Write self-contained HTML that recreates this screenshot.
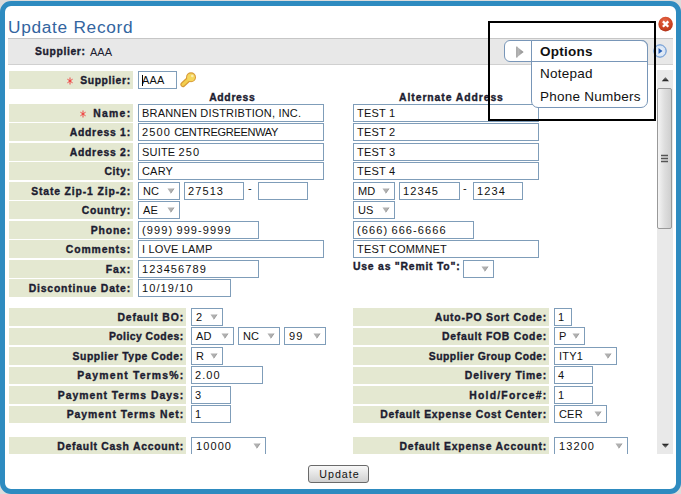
<!DOCTYPE html>
<html><head><meta charset="utf-8"><style>
html,body{margin:0;padding:0;}
body{width:681px;height:494px;overflow:hidden;background:#dcdcdc;position:relative;font-family:"Liberation Sans",sans-serif;}
#dlg{position:absolute;left:0;top:1px;width:671px;height:483px;border:5px solid #2e8bc0;border-radius:11px;background:#fff;}
#title{position:absolute;left:8px;top:17px;font-size:17.3px;letter-spacing:0.7px;color:#33659f;white-space:nowrap;}
#bar{position:absolute;left:8px;top:38px;width:665px;height:25px;background:#e8e8e8;border-top:1px solid #c6c6c6;border-bottom:1px solid #d0d0d0;}
#bar .s{position:absolute;left:27px;top:7px;font-size:10.4px;font-weight:bold;color:#1c1c30;white-space:nowrap;}
#bar .v{position:absolute;left:82px;top:6.5px;font-size:11px;color:#1c1c30;}
#clip{position:absolute;left:0;top:65px;width:681px;height:389px;overflow:hidden;}
#content{position:absolute;left:0;top:-65px;width:681px;height:600px;}
.lc{position:absolute;background:#e4e8d1;text-align:right;font-size:10.4px;font-weight:bold;color:#1c1c30;white-space:nowrap;box-sizing:border-box;padding-right:2.9px;}
.st{margin-right:7px;vertical-align:-1px;}
.dg{letter-spacing:1.1px;}
.in{position:absolute;border:1px solid #7f9db9;background:#fff;font-size:11px;letter-spacing:0.18px;color:#111;white-space:nowrap;padding-left:3px;box-sizing:content-box;overflow:hidden;}
.in{padding-left:0;text-indent:3px;}
.ar{position:absolute;right:4.2px;top:5.3px;}
.t{position:absolute;font-size:11px;color:#111;white-space:nowrap;}
.dash{line-height:14px;margin-top:-1px;}
.bl{position:absolute;font-size:10.4px;font-weight:bold;color:#1c1c30;white-space:nowrap;}
.hd{position:absolute;text-align:center;font-size:10.4px;font-weight:bold;color:#1c1c30;}
#sb{position:absolute;left:657px;top:70px;width:16px;height:384px;background:#e9e9e9;}
#thumb{position:absolute;left:657px;top:88px;width:15px;height:141px;border:1px solid #999;border-radius:2px;box-sizing:border-box;background:linear-gradient(to right,#f4f4f4,#dedede 50%,#cfcfcf);}
#blackbox{position:absolute;left:488px;top:21px;width:164px;height:96px;border:2px solid #000;}
#pill{position:absolute;left:504px;top:40px;width:142px;height:20px;border:1px solid #7896b8;border-radius:6px;background:#fff;}
#menu{position:absolute;left:531px;top:40px;width:115px;height:66px;border:1px solid #7896b8;border-radius:0 7px 7px 7px;background:#fff;}
#menu .o{position:absolute;left:8px;font-size:13.5px;letter-spacing:0.25px;color:#111;white-space:nowrap;}
#btn{position:absolute;left:308px;top:465px;width:59px;height:16px;border:1px solid #6a6a6a;border-radius:3px;box-sizing:content-box;background:linear-gradient(#f8f8f8,#e6e6e6 45%,#d0d0d0);font-size:10.7px;letter-spacing:1px;text-indent:2px;text-align:center;line-height:17px;color:#111;}
.lc,.bl,.hd,#bar .s{-webkit-text-stroke:0.35px #1c1c30;}
</style></head><body>
<div id="dlg"></div>
<div id="title">Update Record</div>
<div id="bar"><span class="s"><span style="letter-spacing:0.617px;margin-right:-0.617px">Supplier:</span></span><span class="v">AAA</span></div>
<svg style="position:absolute;left:657px;top:16px" width="17" height="17" viewBox="0 0 17 17"><defs><radialGradient id="rg" cx="0.45" cy="0.3" r="0.75"><stop offset="0" stop-color="#e8684a"/><stop offset="0.7" stop-color="#c8401f"/><stop offset="1" stop-color="#a8301a"/></radialGradient></defs><circle cx="8.6" cy="8.1" r="7.3" fill="url(#rg)"/><path d="M5.9 5.4 L11.3 10.8 M11.3 5.4 L5.9 10.8" stroke="#fff" stroke-width="2.3" stroke-linecap="butt"/></svg>
<svg style="position:absolute;left:653px;top:44px" width="14" height="14" viewBox="0 0 14 14"><defs><radialGradient id="bg2" cx="0.5" cy="0.5" r="0.6"><stop offset="0" stop-color="#f4f8fd"/><stop offset="1" stop-color="#c7d9ef"/></radialGradient></defs><circle cx="7" cy="7" r="6.2" fill="url(#bg2)" stroke="#5d8fd0" stroke-width="1"/><path d="M5.5 4 L9.5 7 L5.5 10 Z" fill="#2a62b8"/></svg>
<div id="clip"><div id="content">
<div class="lc" style="left:9px;top:71px;width:124px;height:18px;line-height:19px"><svg class="st" width="6" height="8" viewBox="0 0 6 8"><path d="M3 0.5 V7.5 M0.4 2.2 L5.6 5.8 M0.4 5.8 L5.6 2.2" stroke="#f03c3c" stroke-width="0.95"/></svg><span style="letter-spacing:0.617px;margin-right:-0.617px">Supplier:</span></div>
<div class="in" style="left:138px;top:71px;width:37px;height:16px;line-height:16px"><span style="position:absolute;left:3px;top:3px;width:1px;height:11px;background:#000"></span>AAA</div>
<div class="lc" style="left:9px;top:104px;width:124px;height:18px;line-height:19px"><svg class="st" width="6" height="8" viewBox="0 0 6 8"><path d="M3 0.5 V7.5 M0.4 2.2 L5.6 5.8 M0.4 5.8 L5.6 2.2" stroke="#f03c3c" stroke-width="0.95"/></svg><span style="letter-spacing:1.275px;margin-right:-1.275px">Name:</span></div>
<div class="lc" style="left:9px;top:123px;width:124px;height:18px;line-height:19px"><span style="letter-spacing:0.751px;margin-right:-0.751px">Address 1:</span></div>
<div class="lc" style="left:9px;top:143px;width:124px;height:18px;line-height:19px"><span style="letter-spacing:0.751px;margin-right:-0.751px">Address 2:</span></div>
<div class="lc" style="left:9px;top:162px;width:124px;height:18px;line-height:19px"><span style="letter-spacing:0.643px;margin-right:-0.643px">City:</span></div>
<div class="lc" style="left:9px;top:182px;width:124px;height:18px;line-height:19px"><span style="letter-spacing:0.863px;margin-right:-0.863px">State Zip-1 Zip-2:</span></div>
<div class="lc" style="left:9px;top:201px;width:124px;height:18px;line-height:19px"><span style="letter-spacing:0.739px;margin-right:-0.739px">Country:</span></div>
<div class="lc" style="left:9px;top:221px;width:124px;height:18px;line-height:19px"><span style="letter-spacing:0.81px;margin-right:-0.81px">Phone:</span></div>
<div class="lc" style="left:9px;top:240px;width:124px;height:18px;line-height:19px"><span style="letter-spacing:0.901px;margin-right:-0.901px">Comments:</span></div>
<div class="lc" style="left:9px;top:260px;width:124px;height:18px;line-height:19px"><span style="letter-spacing:0.998px;margin-right:-0.998px">Fax:</span></div>
<div class="lc" style="left:9px;top:279px;width:124px;height:18px;line-height:19px"><span style="letter-spacing:0.814px;margin-right:-0.814px">Discontinue Date:</span></div>
<div class="in" style="left:138px;top:104px;width:184px;height:16px;line-height:16px">BRANNEN DISTRIBTION, INC<span class="dg">.</span></div>
<div class="in" style="left:138px;top:123px;width:184px;height:16px;line-height:16px"><span class="dg">2500</span> <span style="letter-spacing:-0.3px">CENTREGREENWAY</span></div>
<div class="in" style="left:138px;top:143px;width:184px;height:16px;line-height:16px">SUITE <span class="dg">250</span></div>
<div class="in" style="left:138px;top:162px;width:184px;height:16px;line-height:16px">CARY</div>
<div class="in" style="left:138px;top:182px;width:40px;height:16px;line-height:16px;text-indent:4px">NC<svg class="ar" width="8" height="6" viewBox="0 0 8 6"><path d="M0.5 0.5 H7 L3.75 5.3 Z" fill="#b0b0b0"/><path d="M7 0.6 L3.75 5.3" stroke="#8a8a8a" stroke-width="0.8"/></svg></div>
<div class="in" style="left:184px;top:182px;width:58px;height:16px;line-height:16px"><span class="dg">27513</span></div>
<div class="t dash" style="left:248px;top:182px">-</div>
<div class="in" style="left:258px;top:182px;width:48px;height:16px;line-height:16px"></div>
<div class="in" style="left:138px;top:201px;width:40px;height:16px;line-height:16px;text-indent:4px">AE<svg class="ar" width="8" height="6" viewBox="0 0 8 6"><path d="M0.5 0.5 H7 L3.75 5.3 Z" fill="#b0b0b0"/><path d="M7 0.6 L3.75 5.3" stroke="#8a8a8a" stroke-width="0.8"/></svg></div>
<div class="in" style="left:138px;top:221px;width:119px;height:16px;line-height:16px"><span class="dg">(999)</span> <span class="dg">999-9999</span></div>
<div class="in" style="left:138px;top:240px;width:184px;height:16px;line-height:16px">I LOVE LAMP</div>
<div class="in" style="left:138px;top:260px;width:119px;height:16px;line-height:16px"><span class="dg">123456789</span></div>
<div class="in" style="left:138px;top:279px;width:91px;height:16px;line-height:16px"><span class="dg">10/19/10</span></div>
<div class="in" style="left:353px;top:104px;width:184px;height:16px;line-height:16px">TEST <span class="dg">1</span></div>
<div class="in" style="left:353px;top:123px;width:184px;height:16px;line-height:16px">TEST <span class="dg">2</span></div>
<div class="in" style="left:353px;top:143px;width:184px;height:16px;line-height:16px">TEST <span class="dg">3</span></div>
<div class="in" style="left:353px;top:162px;width:184px;height:16px;line-height:16px">TEST <span class="dg">4</span></div>
<div class="in" style="left:353px;top:182px;width:40px;height:16px;line-height:16px;text-indent:4px">MD<svg class="ar" width="8" height="6" viewBox="0 0 8 6"><path d="M0.5 0.5 H7 L3.75 5.3 Z" fill="#b0b0b0"/><path d="M7 0.6 L3.75 5.3" stroke="#8a8a8a" stroke-width="0.8"/></svg></div>
<div class="in" style="left:399px;top:182px;width:59px;height:16px;line-height:16px"><span class="dg">12345</span></div>
<div class="t dash" style="left:463px;top:182px">-</div>
<div class="in" style="left:473px;top:182px;width:48px;height:16px;line-height:16px"><span class="dg">1234</span></div>
<div class="in" style="left:353px;top:201px;width:40px;height:16px;line-height:16px;text-indent:4px">US<svg class="ar" width="8" height="6" viewBox="0 0 8 6"><path d="M0.5 0.5 H7 L3.75 5.3 Z" fill="#b0b0b0"/><path d="M7 0.6 L3.75 5.3" stroke="#8a8a8a" stroke-width="0.8"/></svg></div>
<div class="in" style="left:353px;top:221px;width:119px;height:16px;line-height:16px"><span class="dg">(666)</span> <span class="dg">666-6666</span></div>
<div class="in" style="left:353px;top:240px;width:184px;height:16px;line-height:16px">TEST COMMNET</div>
<div class="bl" style="left:353px;top:257.5px;height:18px;line-height:18px"><span style="letter-spacing:0.781px;margin-right:-0.781px">Use as "Remit To":</span></div>
<div class="in" style="left:463px;top:260px;width:29px;height:16px;line-height:16px;text-indent:4px"><svg class="ar" width="8" height="6" viewBox="0 0 8 6"><path d="M0.5 0.5 H7 L3.75 5.3 Z" fill="#b0b0b0"/><path d="M7 0.6 L3.75 5.3" stroke="#8a8a8a" stroke-width="0.8"/></svg></div>
<div class="hd" style="left:139px;top:92px;width:186px"><span style="letter-spacing:0.684px;margin-right:-0.684px">Address</span></div>
<div class="hd" style="left:353px;top:92px;width:196px"><span style="letter-spacing:0.917px;margin-right:-0.917px">Alternate Address</span></div>
<div class="lc" style="left:9px;top:308px;width:177px;height:18px;line-height:19px"><span style="letter-spacing:0.851px;margin-right:-0.851px">Default BO:</span></div>
<div class="lc" style="left:9px;top:328px;width:177px;height:17px;line-height:18px"><span style="letter-spacing:0.454px;margin-right:-0.454px">Policy Codes:</span></div>
<div class="lc" style="left:9px;top:347px;width:177px;height:18px;line-height:19px"><span style="letter-spacing:0.572px;margin-right:-0.572px">Supplier Type Code:</span></div>
<div class="lc" style="left:9px;top:367px;width:177px;height:17px;line-height:18px"><span style="letter-spacing:1.182px;margin-right:-1.182px">Payment Terms%:</span></div>
<div class="lc" style="left:9px;top:386px;width:177px;height:18px;line-height:19px"><span style="letter-spacing:0.97px;margin-right:-0.97px">Payment Terms Days:</span></div>
<div class="lc" style="left:9px;top:406px;width:177px;height:17px;line-height:18px"><span style="letter-spacing:0.986px;margin-right:-0.986px">Payment Terms Net:</span></div>
<div class="lc" style="left:9px;top:437px;width:177px;height:18px;line-height:19px"><span style="letter-spacing:0.737px;margin-right:-0.737px">Default Cash Account:</span></div>
<div class="in" style="left:191px;top:308px;width:30px;height:16px;line-height:16px;text-indent:4px"><span class="dg">2</span><svg class="ar" width="8" height="6" viewBox="0 0 8 6"><path d="M0.5 0.5 H7 L3.75 5.3 Z" fill="#b0b0b0"/><path d="M7 0.6 L3.75 5.3" stroke="#8a8a8a" stroke-width="0.8"/></svg></div>
<div class="in" style="left:191px;top:327px;width:41px;height:16px;line-height:16px;text-indent:4px">AD<svg class="ar" width="8" height="6" viewBox="0 0 8 6"><path d="M0.5 0.5 H7 L3.75 5.3 Z" fill="#b0b0b0"/><path d="M7 0.6 L3.75 5.3" stroke="#8a8a8a" stroke-width="0.8"/></svg></div>
<div class="in" style="left:238px;top:327px;width:40px;height:16px;line-height:16px;text-indent:4px">NC<svg class="ar" width="8" height="6" viewBox="0 0 8 6"><path d="M0.5 0.5 H7 L3.75 5.3 Z" fill="#b0b0b0"/><path d="M7 0.6 L3.75 5.3" stroke="#8a8a8a" stroke-width="0.8"/></svg></div>
<div class="in" style="left:284px;top:327px;width:40px;height:16px;line-height:16px;text-indent:4px"><span class="dg">99</span><svg class="ar" width="8" height="6" viewBox="0 0 8 6"><path d="M0.5 0.5 H7 L3.75 5.3 Z" fill="#b0b0b0"/><path d="M7 0.6 L3.75 5.3" stroke="#8a8a8a" stroke-width="0.8"/></svg></div>
<div class="in" style="left:191px;top:347px;width:30px;height:16px;line-height:16px;text-indent:4px">R<svg class="ar" width="8" height="6" viewBox="0 0 8 6"><path d="M0.5 0.5 H7 L3.75 5.3 Z" fill="#b0b0b0"/><path d="M7 0.6 L3.75 5.3" stroke="#8a8a8a" stroke-width="0.8"/></svg></div>
<div class="in" style="left:191px;top:366px;width:70px;height:16px;line-height:16px"><span class="dg">2.00</span></div>
<div class="in" style="left:191px;top:386px;width:38px;height:16px;line-height:16px"><span class="dg">3</span></div>
<div class="in" style="left:191px;top:405px;width:38px;height:16px;line-height:16px"><span class="dg">1</span></div>
<div class="in" style="left:191px;top:437px;width:73px;height:16px;line-height:16px;text-indent:4px"><span class="dg">10000</span><svg class="ar" width="8" height="6" viewBox="0 0 8 6"><path d="M0.5 0.5 H7 L3.75 5.3 Z" fill="#b0b0b0"/><path d="M7 0.6 L3.75 5.3" stroke="#8a8a8a" stroke-width="0.8"/></svg></div>
<div class="lc" style="left:353px;top:308px;width:196px;height:18px;line-height:19px"><span style="letter-spacing:0.785px;margin-right:-0.785px">Auto-PO Sort Code:</span></div>
<div class="lc" style="left:353px;top:328px;width:196px;height:17px;line-height:18px"><span style="letter-spacing:0.738px;margin-right:-0.738px">Default FOB Code:</span></div>
<div class="lc" style="left:353px;top:347px;width:196px;height:18px;line-height:19px"><span style="letter-spacing:0.496px;margin-right:-0.496px">Supplier Group Code:</span></div>
<div class="lc" style="left:353px;top:367px;width:196px;height:17px;line-height:18px"><span style="letter-spacing:0.801px;margin-right:-0.801px">Delivery Time:</span></div>
<div class="lc" style="left:353px;top:386px;width:196px;height:18px;line-height:19px"><span style="letter-spacing:1.205px;margin-right:-1.205px">Hold/Force#:</span></div>
<div class="lc" style="left:353px;top:406px;width:196px;height:17px;line-height:18px"><span style="letter-spacing:0.733px;margin-right:-0.733px">Default Expense Cost Center:</span></div>
<div class="lc" style="left:353px;top:437px;width:196px;height:18px;line-height:19px"><span style="letter-spacing:0.792px;margin-right:-0.792px">Default Expense Account:</span></div>
<div class="in" style="left:554px;top:308px;width:16px;height:16px;line-height:16px"><span class="dg">1</span></div>
<div class="in" style="left:554px;top:327px;width:29px;height:16px;line-height:16px;text-indent:4px">P<svg class="ar" width="8" height="6" viewBox="0 0 8 6"><path d="M0.5 0.5 H7 L3.75 5.3 Z" fill="#b0b0b0"/><path d="M7 0.6 L3.75 5.3" stroke="#8a8a8a" stroke-width="0.8"/></svg></div>
<div class="in" style="left:554px;top:347px;width:61px;height:16px;line-height:16px;text-indent:4px">ITY<span class="dg">1</span><svg class="ar" width="8" height="6" viewBox="0 0 8 6"><path d="M0.5 0.5 H7 L3.75 5.3 Z" fill="#b0b0b0"/><path d="M7 0.6 L3.75 5.3" stroke="#8a8a8a" stroke-width="0.8"/></svg></div>
<div class="in" style="left:554px;top:366px;width:37px;height:16px;line-height:16px"><span class="dg">4</span></div>
<div class="in" style="left:554px;top:386px;width:37px;height:16px;line-height:16px"><span class="dg">1</span></div>
<div class="in" style="left:554px;top:405px;width:51px;height:16px;line-height:16px;text-indent:4px">CER<svg class="ar" width="8" height="6" viewBox="0 0 8 6"><path d="M0.5 0.5 H7 L3.75 5.3 Z" fill="#b0b0b0"/><path d="M7 0.6 L3.75 5.3" stroke="#8a8a8a" stroke-width="0.8"/></svg></div>
<div class="in" style="left:554px;top:437px;width:72px;height:16px;line-height:16px;text-indent:4px"><span class="dg">13200</span><svg class="ar" width="8" height="6" viewBox="0 0 8 6"><path d="M0.5 0.5 H7 L3.75 5.3 Z" fill="#b0b0b0"/><path d="M7 0.6 L3.75 5.3" stroke="#8a8a8a" stroke-width="0.8"/></svg></div>
<svg style="position:absolute;left:178px;top:70px" width="22" height="20" viewBox="0 0 22 20"><line x1="12" y1="8" x2="5" y2="14.5" stroke="#d89a38" stroke-width="5.2" stroke-linecap="round"/><circle cx="13" cy="7.3" r="5" fill="#d89a38"/><line x1="12" y1="8" x2="5" y2="14.5" stroke="#f3cf4e" stroke-width="3" stroke-linecap="round"/><circle cx="13" cy="7.3" r="3.9" fill="#f5d65c"/><circle cx="14.3" cy="6" r="1.3" fill="#fbeeb0"/></svg>
</div></div>
<div id="sb"></div>
<svg style="position:absolute;left:657px;top:74px" width="16" height="10"><defs><linearGradient id="ua" x1="0" y1="1" x2="0" y2="0"><stop offset="0" stop-color="#151515"/><stop offset="1" stop-color="#909090"/></linearGradient></defs><path d="M4.8 7.2 L12 7.2 L8.4 3 Z" fill="url(#ua)"/></svg>
<div id="thumb"></div>
<svg style="position:absolute;left:660px;top:153.2px" width="9" height="12"><path d="M1 2.5 H8 M1 5.5 H8 M1 8.5 H8" stroke="#555" stroke-width="1.3"/></svg>
<svg style="position:absolute;left:657px;top:440px" width="16" height="10"><defs><linearGradient id="da" x1="0" y1="0" x2="0" y2="1"><stop offset="0" stop-color="#151515"/><stop offset="1" stop-color="#909090"/></linearGradient></defs><path d="M4.8 3.8 L12 3.8 L8.4 8 Z" fill="url(#da)"/></svg>
<div id="pill"><svg style="position:absolute;left:10.5px;top:4.5px" width="9" height="13"><defs><linearGradient id="tg" x1="0" x2="1"><stop offset="0" stop-color="#c4c4c4"/><stop offset="1" stop-color="#8a8a8a"/></linearGradient></defs><path d="M0.8 0.6 L7.6 6 L0.8 11.6 Z" fill="url(#tg)"/><path d="M0.8 0.6 V11.6" stroke="#8e8e8e" stroke-width="1"/></svg></div>
<div id="menu"><div style="position:absolute;left:0;top:20px;width:115px;height:1px;background:#7896b8"></div>
<div class="o" style="top:3px;font-weight:bold">Options</div>
<div class="o" style="top:25px">Notepad</div>
<div class="o" style="top:48px">Phone Numbers</div></div>
<div id="blackbox"></div>
<div id="btn">Update</div>
</body></html>
